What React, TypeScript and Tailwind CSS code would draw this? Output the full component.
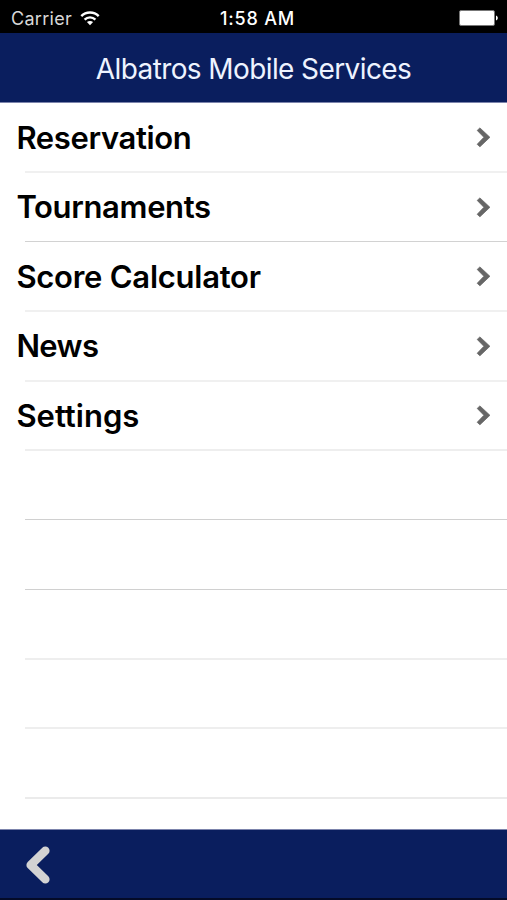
type MenuItem = {
    label: string;
    tracking: string;
};

const menuItems: MenuItem[] = [
    { label: "Reservation", tracking: "tracking-[-0.35px]" },
    { label: "Tournaments", tracking: "tracking-[-0.35px] pb-0.5" },
    { label: "Score Calculator", tracking: "tracking-[-0.25px]" },
    { label: "News", tracking: "tracking-[-0.6px] pb-0.5" },
    { label: "Settings", tracking: "tracking-[0px]" },
];

// Height of every row with its separator; the list runs on past the last item with blank rows
const rows = [
    { height: "h-[70px]", line: "h-[2px] bg-[#f0f0f0]" },
    { height: "h-[69px]", line: "h-px bg-[#d2d2d2]" },
    { height: "h-[70px]", line: "h-[2px] bg-[#f0f0f0]" },
    { height: "h-[70px]", line: "h-[2px] bg-[#f0f0f0]" },
    { height: "h-[69px]", line: "h-[2px] bg-[#eeeeee]" },
    { height: "h-[69px]", line: "h-px bg-[#d0d0d0]" },
    { height: "h-[70px]", line: "h-px bg-[#d0d0d0]" },
    { height: "h-[70px]", line: "h-[2px] bg-[#eeeeee]" },
    { height: "h-[69px]", line: "h-[2px] bg-[#eeeeee]" },
    { height: "h-[70px]", line: "h-[2px] bg-[#ebebeb]" },
];

const WifiIcon = () => (
    <svg className="h-[15px] w-5" viewBox="0 0 20 15" fill="none" stroke="#fff" strokeWidth="2.4">
        <path d="M1.3 5.2C6 0.3 14 0.3 18.7 5.2" />
        <path d="M4.6 8.6C7.6 5.6 12.4 5.6 15.4 8.6" />
        <path d="M10 14.3L6.9 11.1C8.6 9.5 11.4 9.5 13.1 11.1Z" fill="#fff" stroke="none" />
    </svg>
);

const BatteryIcon = () => (
    <svg className="h-4 w-10" viewBox="0 0 40 16">
        <rect x="0.5" y="0.5" width="35" height="15" rx="1.5" fill="#fff" stroke="#777" />
        <path d="M37 5.5C39.4 6.2 39.4 9.8 37 10.5Z" fill="#fff" />
    </svg>
);

const ChevronRight = () => (
    <svg className="h-[21px] w-[15px]" viewBox="0 0 15 21" fill="#666" stroke="#666" strokeWidth="0.8" strokeLinejoin="round">
        <path d="M1.2 3.4L3.9 0.9L13.9 10.3L3.9 19.8L1.2 17.3L7.9 10.3Z" />
    </svg>
);

const ChevronLeft = () => (
    <svg className="h-[38px] w-6" viewBox="0 0 24 38" fill="none" stroke="#d3d3d3" strokeWidth="8.6" strokeLinecap="round" strokeLinejoin="round">
        <path d="M19.3 4.7L4.7 19L19.3 33.3" />
    </svg>
);

export default function App() {
    return (
        <div className="flex h-[900px] w-[507px] flex-col overflow-hidden bg-white font-['Inter',sans-serif]">
            <div className="grid h-[33px] shrink-0 grid-cols-3 items-center bg-black pt-[3px] text-white">
                <div className="flex items-center gap-2 pl-[11px]">
                    <span className="pt-0.5 text-[18px] leading-none tracking-[0.3px] text-[#d8d8d8]">Carrier</span>
                    <WifiIcon />
                </div>
                <span className="pt-0.5 pl-2 text-center text-[18px] leading-none font-medium tracking-[0.8px]">1:58 AM</span>
                <div className="flex justify-end pr-2">
                    <BatteryIcon />
                </div>
            </div>

            <header className="flex h-[70px] shrink-0 items-center justify-center border-b border-[#7c84ac] bg-[#0a1e5e] pt-0.5">
                <h1 className="text-[28px] leading-none tracking-[-0.6px] text-[#eef3ff]">Albatros Mobile Services</h1>
            </header>

            <ul className="grow">
                {rows.map((row, i) => {
                    const item = menuItems[i];
                    return (
                        <li key={i} className={`flex flex-col ${row.height}`}>
                            <div className="flex grow items-center justify-between pr-4 pl-[16.4px]">
                                {item && (
                                    <>
                                        <span className={`text-[31px] leading-none font-semibold text-black ${item.tracking}`}>{item.label}</span>
                                        <ChevronRight />
                                    </>
                                )}
                            </div>
                            <div className={`ml-[25px] shrink-0 ${row.line}`} />
                        </li>
                    );
                })}
            </ul>

            <footer className="flex h-[71px] shrink-0 items-center border-t border-b-2 border-t-[#7c84ac] border-b-[#040b28] bg-[#0a1e5e] pt-0.5 pl-[26px]">
                <button aria-label="Back">
                    <ChevronLeft />
                </button>
            </footer>
        </div>
    );
}
